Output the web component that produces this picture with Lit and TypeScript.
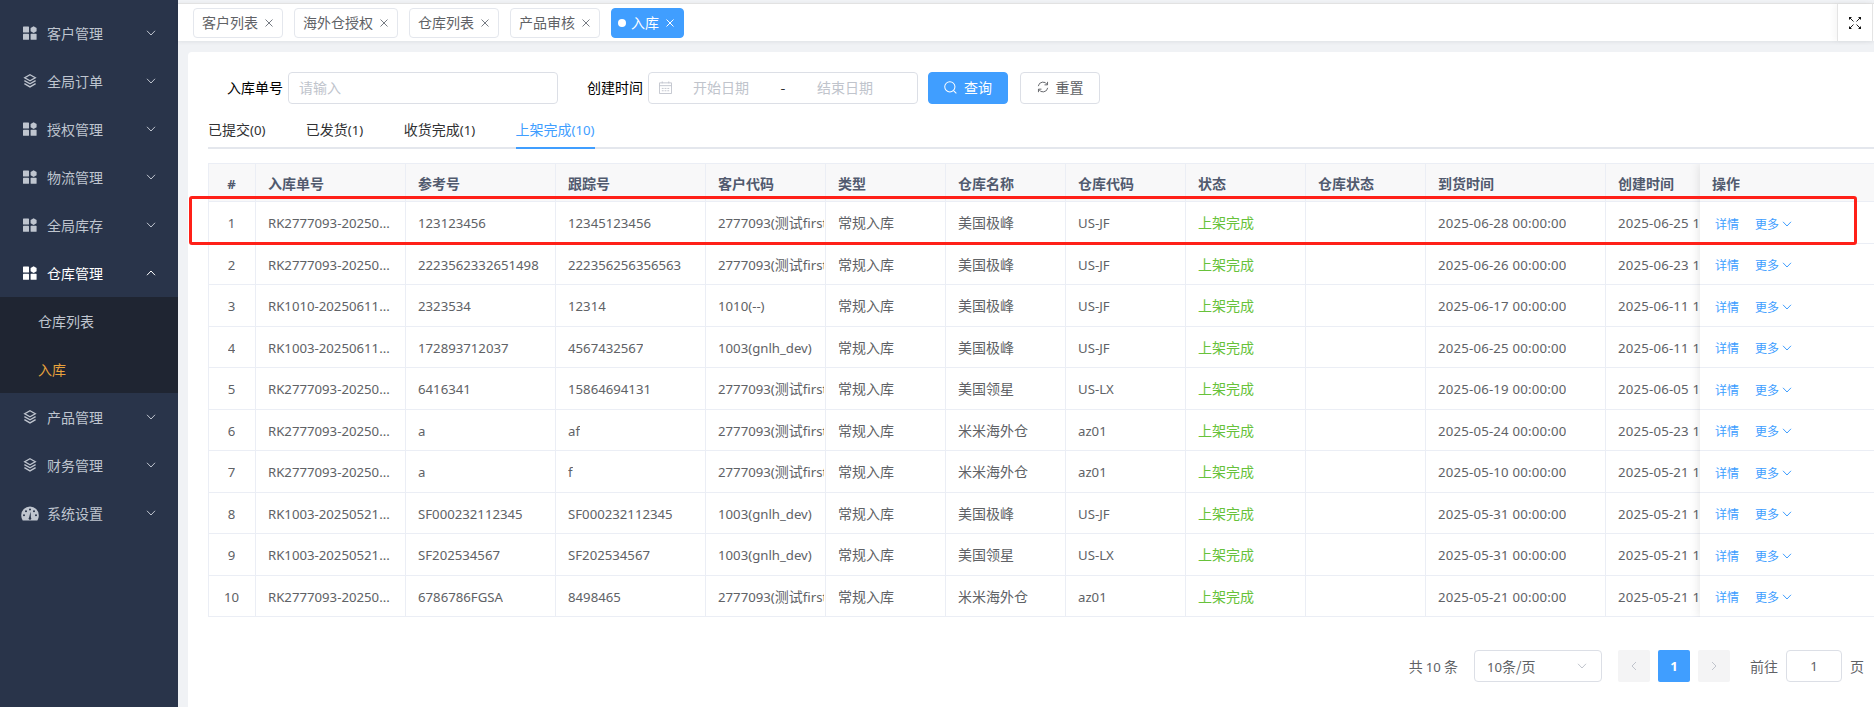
import { LitElement, css, html, svg } from "lit";
import { customElement } from "lit/decorators.js";

// wraps latin runs so they get their own size next to the CJK glyphs
const t = (s: string) =>
  s.split(/([\x00-\x7f]+)/).map((p) => (/^[\x00-\x7f]+$/.test(p) ? html`<span class="lat">${p}</span>` : p));

const chevron = (up = false) => html`<svg class="chev" viewBox="0 0 10 6" width="10" height="6">
  <polyline points=${up ? "1,5.2 5,1 9,5.2" : "1,.8 5,5 9,.8"} fill="none" stroke="currentColor" stroke-width="1"></polyline>
</svg>`;

const gridIcon = svg`<svg viewBox="0 0 14 14" width="14" height="14" fill="currentColor">
  <rect x="0" y="0.5" width="6" height="6" rx=".6"></rect>
  <path d="M10.6.2l3 1.7v3.3l-3 1.7-3-1.7V1.9z"></path>
  <rect x="0" y="7.8" width="6" height="6" rx=".6"></rect>
  <rect x="7.6" y="7.8" width="6" height="6" rx=".6"></rect>
</svg>`;

const layersIcon = svg`<svg viewBox="0 0 14 14" width="14" height="14" fill="none" stroke="currentColor" stroke-width="1.3">
  <path d="M7 .8l5.3 3-5.3 3-5.3-3z"></path>
  <path d="M1.4 6.6L7 9.8l5.6-3.2"></path>
  <path d="M1.4 9.6L7 12.9l5.6-3.3"></path>
</svg>`;

const dashIcon = svg`<svg viewBox="0 0 18 15" width="18" height="15">
  <path fill="currentColor" fill-rule="evenodd" d="M9 .5a8.8 8.8 0 0 1 8.8 8.8c0 1.900-.5 3.600-1.500 5.200H1.700A9.600 9.600 0 0 1 .2 9.300 8.800 8.800 0 0 1 9 .5zM3 8.200a1 1 0 1 0 0 2 1 1 0 0 0 0-2zm2-4a1 1 0 1 0 0 2 1 1 0 0 0 0-2zm4-1.800a1 1 0 1 0 0 2 1 1 0 0 0 0-2zm4 1.800a1 1 0 1 0 0 2 1 1 0 0 0 0-2zm2 4a1 1 0 1 0 0 2 1 1 0 0 0 0-2zM9.600 5.500l-1.500 6a1.300 1.300 0 1 0 1.800.1z"></path>
</svg>`;

const menu = [
  { label: "客户管理", icon: gridIcon },
  { label: "全局订单", icon: layersIcon },
  { label: "授权管理", icon: gridIcon },
  { label: "物流管理", icon: gridIcon },
  { label: "全局库存", icon: gridIcon },
  { label: "仓库管理", icon: gridIcon, open: true, children: ["仓库列表", "入库"] },
  { label: "产品管理", icon: layersIcon },
  { label: "财务管理", icon: layersIcon },
  { label: "系统设置", icon: dashIcon, wide: true },
];

const tabsOpen = ["客户列表", "海外仓授权", "仓库列表", "产品审核"];
const tabs = ["已提交(0)", "已发货(1)", "收货完成(1)", "上架完成(10)"];

const columns = [
  ["#", 48],
  ["入库单号", 150],
  ["参考号", 150],
  ["跟踪号", 150],
  ["客户代码", 120],
  ["类型", 120],
  ["仓库名称", 120],
  ["仓库代码", 120],
  ["状态", 120],
  ["仓库状态", 120],
  ["到货时间", 180],
  ["创建时间", 180],
] as [string, number][];

const JF = ["美国极峰", "US-JF"];
const LX = ["美国领星", "US-LX"];
const MM = ["米米海外仓", "az01"];
const C1 = "2777093(测试first测试)";
const C2 = "1003(gnlh_dev)";
const R1 = "RK2777093-20250...";
const R2 = "RK1003-20250611...";
const R3 = "RK1003-20250521...";

const rows: [string, string, string, string, string[], string, string][] = [
  [R1, "123123456", "12345123456", C1, JF, "2025-06-28", "2025-06-25"],
  [R1, "2223562332651498", "222356256356563", C1, JF, "2025-06-26", "2025-06-23"],
  ["RK1010-20250611...", "2323534", "12314", "1010(--)", JF, "2025-06-17", "2025-06-11"],
  [R2, "172893712037", "4567432567", C2, JF, "2025-06-25", "2025-06-11"],
  [R1, "6416341", "15864694131", C1, LX, "2025-06-19", "2025-06-05"],
  [R1, "a", "af", C1, MM, "2025-05-24", "2025-05-23"],
  [R1, "a", "f", C1, MM, "2025-05-10", "2025-05-21"],
  [R3, "SF000232112345", "SF000232112345", C2, JF, "2025-05-31", "2025-05-21"],
  [R3, "SF202534567", "SF202534567", C2, LX, "2025-05-31", "2025-05-21"],
  [R1, "6786786FGSA", "8498465", C1, MM, "2025-05-21", "2025-05-21"],
];

@customElement("app-root")
export class AppRoot extends LitElement {
  static styles = css`
    :host {
      display: block;
      font-family: "Noto Sans CJK SC", "Noto Sans", sans-serif;
      font-size: 14px;
      color: #606266;
    }
    .lat {
      font-family: "Noto Sans", sans-serif;
      font-size: 13.2px;
    }
    .page {
      position: relative;
      display: flex;
      height: 100vh;
      overflow: hidden;
      background: #f0f2f5;
    }

    /* sidebar */
    .side {
      flex: none;
      width: 178px;
      padding-top: 9px;
      background: #29344a;
      color: #bfc5cf;
    }
    .item {
      display: flex;
      align-items: center;
      height: 48px;
      padding: 0 22px 0 23px;
    }
    .item .ico {
      display: flex;
      width: 14px;
      margin-right: 10px;
    }
    .item .ico.wide {
      margin-left: -2px;
      width: 18px;
      margin-right: 8px;
    }
    .item .name {
      flex: 1;
    }
    .chev {
      display: block;
    }
    .item.open {
      color: #fff;
    }
    .sub {
      background: #1f2532;
    }
    .sub div {
      height: 48px;
      line-height: 48px;
      padding-left: 38px;
      color: #bfc5cf;
    }
    .sub .on {
      color: #e8a33d;
    }

    /* tag bar */
    .main {
      flex: 1;
      min-width: 0;
      display: flex;
      flex-direction: column;
    }
    .bar {
      flex: none;
      display: flex;
      height: 37px;
      margin-top: 3px;
      border-top: 1px solid #e2e2e2;
      background: #fff;
      box-shadow: 0 1px 4px rgba(0, 21, 41, 0.08);
      position: relative;
    }
    .tags {
      flex: 1;
      display: flex;
      align-items: center;
      gap: 11px;
      padding: 0 0 0 15px;
    }
    .tag {
      display: flex;
      align-items: center;
      gap: 6px;
      height: 30px;
      padding: 0 8px 2px;
      box-sizing: border-box;
      border: 1px solid #e4e7ed;
      border-radius: 4px;
      white-space: nowrap;
    }
    .tag svg {
      display: block;
      margin-top: 2px;
      color: #777c84;
    }
    .tag.on {
      background: #409eff;
      border-color: #409eff;
      color: #fff;
      padding: 0 8px 2px 6px;
    }
    .tag.on svg {
      color: #fff;
    }
    .dot {
      width: 8px;
      height: 8px;
      margin-top: 2px;
      border-radius: 50%;
      background: #fff;
      margin-right: -1px;
    }
    .full {
      flex: none;
      display: flex;
      align-items: center;
      justify-content: center;
      width: 34px;
      margin-right: 1px;
      border-left: 1px solid #e4e4e4;
      border-right: 1px solid #e4e4e4;
      box-shadow: -3px 0 6px rgba(0, 0, 0, 0.04);
    }

    /* card */
    .card {
      flex: 1;
      margin: 11px 0 0 10px;
      padding: 20px 0 0 20px;
      background: #fff;
      border-radius: 4px 0 0 0;
      overflow: hidden;
    }
    .form {
      display: flex;
      align-items: center;
      height: 32px;
    }
    .label {
      flex: none;
      text-align: right;
      color: #000;
      margin-right: 5px;
      padding-bottom: 2px;
    }
    .field {
      flex: none;
      display: flex;
      align-items: center;
      box-sizing: border-box;
      width: 270px;
      height: 32px;
      padding-bottom: 2px;
      border: 1px solid #dcdfe6;
      border-radius: 4px;
      color: #c0c4cc;
    }
    .field.text {
      padding-left: 10px;
    }
    .cal {
      display: block;
      margin: 0 21px 0 10px;
    }
    .field .sep {
      width: 68px;
      text-align: center;
      color: #303133;
    }
    .btn {
      flex: none;
      display: flex;
      align-items: center;
      justify-content: center;
      gap: 7px;
      box-sizing: border-box;
      width: 80px;
      height: 32px;
      padding-bottom: 2px;
      border: 1px solid #dcdfe6;
      border-radius: 4px;
    }
    .btn.primary {
      background: #409eff;
      border-color: #409eff;
      color: #fff;
      margin: 0 12px 0 10px;
    }

    .tabs {
      display: flex;
      gap: 40.4px;
      height: 38px;
      margin-top: 5px;
      line-height: 40px;
      border-bottom: 2px solid #e4e7ed;
      color: #303133;
    }
    .tab {
      height: 40px;
      box-sizing: border-box;
      white-space: nowrap;
    }
    .tab.on {
      color: #409eff;
      border-bottom: 2px solid #409eff;
    }

    /* table */
    .table {
      display: flex;
      margin-top: 14px;
      overflow: hidden;
      border-top: 1px solid #ebeef5;
      border-left: 1px solid #ebeef5;
    }
    .cols {
      flex: none;
      width: 1491px;
      overflow: hidden;
    }
    .fixed {
      flex: 1;
      position: relative;
      background: #fff;
      box-shadow: 0 0 10px rgba(0, 0, 0, 0.12);
    }
    .tr {
      display: flex;
      box-sizing: border-box;
      height: 41.5px;
      border-bottom: 1px solid #ebeef5;
    }
    .tr.head {
      height: 38px;
      background: #f8f8f9;
      color: #515a6e;
      font-weight: 700;
    }
    .td {
      flex: none;
      display: flex;
      align-items: center;
      box-sizing: border-box;
      padding: 0 1px 0 12px;
      border-right: 1px solid #ebeef5;
    }
    .td.first {
      justify-content: center;
      padding: 0;
      margin-left: -1px;
    }
    .td > div {
      overflow: hidden;
      white-space: nowrap;
    }
    .td .ok {
      color: #67c23a;
    }
    .td .time {
      letter-spacing: 0.2px;
    }
    .td.last {
      border-right: 0;
    }
    .ops {
      display: flex;
      align-items: center;
      padding: 3px 0 0 15px;
      color: #409eff;
      font-size: 12px;
      line-height: 1;
    }
    .ops span {
      margin-right: 16px;
    }
    .ops i {
      margin-right: 3px;
      font-style: normal;
    }

    /* pager */
    .pager {
      display: flex;
      align-items: center;
      justify-content: flex-end;
      height: 32px;
      margin-top: 33px;
      padding-right: 10px;
    }
    .select {
      display: flex;
      align-items: center;
      justify-content: space-between;
      box-sizing: border-box;
      width: 128px;
      height: 32px;
      margin: 0 16px 0 16px;
      padding: 0 14px 0 12px;
      border: 1px solid #dcdfe6;
      border-radius: 4px;
      color: #606266;
    }
    .select .chev {
      color: #c0c4cc;
    }
    .pg {
      display: flex;
      align-items: center;
      justify-content: center;
      width: 32px;
      height: 32px;
      margin-right: 8px;
      border-radius: 2px;
      background: #f4f4f5;
      color: #c0c4cc;
    }
    .pg.last {
      margin-right: 0;
    }
    .pg.on {
      background: #409eff;
      color: #fff;
      font-weight: 700;
    }
    .goto {
      margin-left: 20px;
    }
    .num {
      display: flex;
      align-items: center;
      justify-content: center;
      box-sizing: border-box;
      width: 56px;
      height: 32px;
      margin: 0 8px;
      border: 1px solid #dcdfe6;
      border-radius: 4px;
    }

    /* annotation drawn on the screenshot */
    .mark {
      position: absolute;
      left: 189px;
      top: 196px;
      width: 1668px;
      height: 49px;
      box-sizing: border-box;
      border: 3px solid #ff2018;
      border-radius: 3px;
      pointer-events: none;
    }
  `;

  private renderMenu() {
    return menu.map(
      (m) => html`
        <div class="item ${m.open ? "open" : ""}">
          <span class="ico ${m.wide ? "wide" : ""}">${m.icon}</span>
          <span class="name">${m.label}</span>
          ${chevron(m.open)}
        </div>
        ${m.children
          ? html`<div class="sub">
              ${m.children.map((c) => html`<div class=${c === "入库" ? "on" : ""}>${c}</div>`)}
            </div>`
          : ""}
      `
    );
  }

  private closeIcon() {
    return html`<svg viewBox="0 0 10 10" width="10" height="10">
      <path d="M1.500 1.500l7 7M8.500 1.500l-7 7" stroke="currentColor" stroke-width="1" fill="none"></path>
    </svg>`;
  }

  private renderRow(r: (typeof rows)[number], i: number) {
    const cells = [
      String(i + 1), r[0], r[1], r[2], r[3], "常规入库", r[4][0], r[4][1], "上架完成", "",
      `${r[5]} 00:00:00`, `${r[6]} 10:32:18`,
    ];
    return html`<div class="tr">
      ${cells.map(
        (c, n) => html`<div class="td ${n === 0 ? "first" : ""} ${n === 11 ? "last" : ""}" style="width:${columns[n][1]}px">
          <div class=${n === 8 ? "ok" : n >= 10 ? "time" : ""}>${t(c)}</div>
        </div>`
      )}
    </div>`;
  }

  render() {
    return html`
      <div class="page">
        <aside class="side">${this.renderMenu()}</aside>
        <div class="main">
          <div class="bar">
            <div class="tags">
              ${tabsOpen.map((x) => html`<div class="tag">${x}${this.closeIcon()}</div>`)}
              <div class="tag on"><span class="dot"></span>入库${this.closeIcon()}</div>
            </div>
            <div class="full">
              <svg viewBox="0 0 12 12" width="12" height="12">
                <path d="M4.500 4.500L1 1M7.500 4.500L11 1M4.500 7.500L1 11M7.500 7.500L11 11" stroke="#222" stroke-width="1" fill="none"></path>
                <path d="M0 0h3L0 3zM12 0v3L9 0zM0 12V9l3 3zM12 12H9l3-3z" fill="#111"></path>
              </svg>
            </div>
          </div>
          <div class="card">
            <div class="form">
              <span class="label" style="width:75px">入库单号</span>
              <div class="field text">请输入</div>
              <span class="label" style="width:85px">创建时间</span>
              <div class="field">
                <svg class="cal" viewBox="0 0 14 14" width="13" height="13" fill="none" stroke="#c0c4cc">
                  <path d="M.5 2h13v11.500H.5zM.5 5h13"></path>
                  <path d="M3.500 .5v2M10.500 .5v2M3 8h2M6 8h2M9 8h2M3 10.500h2M6 10.500h2M9 10.500h2"></path>
                </svg>
                <span>开始日期</span>
                <span class="sep">-</span>
                <span>结束日期</span>
              </div>
              <div class="btn primary">
                <svg viewBox="0 0 14 14" width="13" height="13" fill="none" stroke="currentColor" stroke-width="1.100">
                  <circle cx="6.300" cy="6.300" r="5.500"></circle>
                  <path d="M10.300 10.300l3 3"></path>
                </svg>
                查询
              </div>
              <div class="btn">
                <svg viewBox="0 0 14 14" width="12" height="12" fill="none" stroke="currentColor" stroke-width="1.100">
                  <path d="M1.500 6A5.600 5.600 0 0 1 12 4.300M12.500 8A5.600 5.600 0 0 1 2 9.700"></path>
                  <path d="M12.300 1v3.500H8.800M1.700 13V9.500h3.500"></path>
                </svg>
                重置
              </div>
            </div>

            <div class="tabs">
              ${tabs.map((x, i) => html`<div class="tab ${i === 3 ? "on" : ""}">${t(x)}</div>`)}
            </div>

            <div class="table">
              <div class="cols">
                <div class="tr head">
                  ${columns.map(
                    ([c, w], n) => html`<div class="td ${n === 0 ? "first" : ""} ${n === 11 ? "last" : ""}" style="width:${w}px">
                      <div>${t(c)}</div>
                    </div>`
                  )}
                </div>
                ${rows.map((r, i) => this.renderRow(r, i))}
              </div>
              <div class="fixed">
                <div class="tr head"><div class="td last"><div>操作</div></div></div>
                ${rows.map(
                  () => html`<div class="tr">
                    <div class="ops"><span>详情</span><i>更多</i>${chevron()}</div>
                  </div>`
                )}
              </div>
            </div>

            <div class="pager">
              <span>共 ${t("10")} 条</span>
              <div class="select"><span>${t("10")}条/页</span>${chevron()}</div>
              <div class="pg">
                <svg viewBox="0 0 6 10" width="6" height="10"><polyline points="5,1 1,5 5,9" fill="none" stroke="currentColor"></polyline></svg>
              </div>
              <div class="pg on">${t("1")}</div>
              <div class="pg last">
                <svg viewBox="0 0 6 10" width="6" height="10"><polyline points="1,1 5,5 1,9" fill="none" stroke="currentColor"></polyline></svg>
              </div>
              <span class="goto">前往</span>
              <div class="num">${t("1")}</div>
              <span>页</span>
            </div>
          </div>
        </div>
        <div class="mark"></div>
      </div>
    `;
  }
}
